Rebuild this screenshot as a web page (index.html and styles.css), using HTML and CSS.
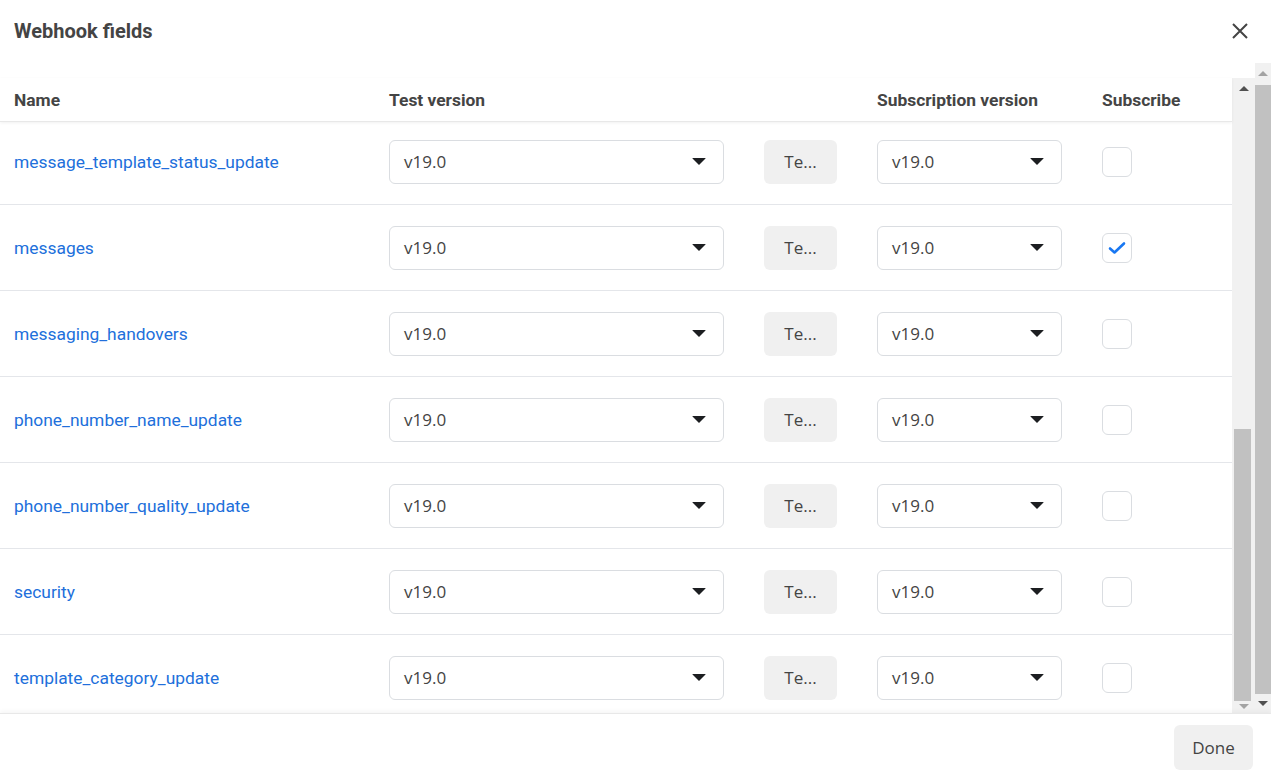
FILE: index.html
```html
<!DOCTYPE html>
<html>
<head>
<meta charset="utf-8">
<link rel="stylesheet" href="styles.css">
</head>
<body>
<div class="dialog">
  <div class="dialog-header">
    <h1 class="title">Webhook fields</h1>
    <button class="close" aria-label="Close">
      <svg width="18" height="18" viewBox="0 0 18 18"><path d="M2 2 L16 16 M16 2 L2 16" stroke="#444" stroke-width="2" fill="none"/></svg>
    </button>
  </div>
  <div class="dialog-body">
    <div class="table-wrap">
      <div class="table">
        <div class="row head">
          <div>Name</div>
          <div>Test version</div>
          <div></div>
          <div>Subscription version</div>
          <div>Subscribe</div>
        </div>
        <div class="rows">
          <div class="row">
            <a class="name">message_template_status_update</a>
            <div class="select big"><span>v19.0</span><i class="caret"></i></div>
            <button class="btn">Te...</button>
            <div class="select"><span>v19.0</span><i class="caret"></i></div>
            <span class="check"></span>
          </div>
          <div class="row">
            <a class="name">messages</a>
            <div class="select big"><span>v19.0</span><i class="caret"></i></div>
            <button class="btn">Te...</button>
            <div class="select"><span>v19.0</span><i class="caret"></i></div>
            <span class="check on"><svg width="18" height="14" viewBox="0 0 18 14"><path d="M2 7.5 L6.5 11.5 L16 2.5" stroke="#1877f2" stroke-width="2.6" fill="none" stroke-linecap="round" stroke-linejoin="round"/></svg></span>
          </div>
          <div class="row">
            <a class="name">messaging_handovers</a>
            <div class="select big"><span>v19.0</span><i class="caret"></i></div>
            <button class="btn">Te...</button>
            <div class="select"><span>v19.0</span><i class="caret"></i></div>
            <span class="check"></span>
          </div>
          <div class="row">
            <a class="name">phone_number_name_update</a>
            <div class="select big"><span>v19.0</span><i class="caret"></i></div>
            <button class="btn">Te...</button>
            <div class="select"><span>v19.0</span><i class="caret"></i></div>
            <span class="check"></span>
          </div>
          <div class="row">
            <a class="name">phone_number_quality_update</a>
            <div class="select big"><span>v19.0</span><i class="caret"></i></div>
            <button class="btn">Te...</button>
            <div class="select"><span>v19.0</span><i class="caret"></i></div>
            <span class="check"></span>
          </div>
          <div class="row">
            <a class="name">security</a>
            <div class="select big"><span>v19.0</span><i class="caret"></i></div>
            <button class="btn">Te...</button>
            <div class="select"><span>v19.0</span><i class="caret"></i></div>
            <span class="check"></span>
          </div>
          <div class="row last">
            <a class="name">template_category_update</a>
            <div class="select big"><span>v19.0</span><i class="caret"></i></div>
            <button class="btn">Te...</button>
            <div class="select"><span>v19.0</span><i class="caret"></i></div>
            <span class="check"></span>
          </div>
        </div>
      </div>
      <div class="scrollbar inner">
        <i class="arr up dark"></i>
        <div class="track"><div class="thumb"></div></div>
        <i class="arr down light"></i>
      </div>
    </div>
    <div class="scrollbar outer">
      <i class="arr up light"></i>
      <div class="track"><div class="thumb"></div></div>
      <i class="arr down dark"></i>
    </div>
  </div>
  <div class="dialog-footer">
    <button class="btn done">Done</button>
  </div>
</div>
</body>
</html>
```

FILE: styles.css
```css
* { box-sizing: border-box; }
html, body { margin: 0; padding: 0; background: #fff; }
body { font-family: Roboto, "Liberation Sans", sans-serif; color: #444950; width: 1271px; height: 778px; overflow: hidden; }

.dialog { display: flex; flex-direction: column; height: 778px; }

.dialog-header { height: 62px; display: flex; align-items: center; justify-content: space-between; padding: 0 22px 0 14px; flex: none; }
.title { margin: 0; font-size: 20px; font-weight: 700; color: #444; letter-spacing: 0; }
.close { background: none; border: 0; padding: 0; width: 18px; height: 18px; display: flex; cursor: pointer; }

.dialog-body { flex: 1; display: flex; min-height: 0; }
.table-wrap { flex: 1; display: flex; margin-top: 16px; min-height: 0; }
.table { flex: 1; display: flex; flex-direction: column; min-width: 0; min-height: 0; }

.row { display: grid; grid-template-columns: 335px 335px 73px 185px 30px; column-gap: 40px; padding-left: 14px; align-items: center; height: 86px; flex: none; border-bottom: 1px solid #e4e6ea; }
.row.head { height: 44px; font-weight: 700; font-size: 17.4px; color: #444; border-bottom: 1px solid #e8e8e8; box-shadow: 0 1px 3px rgba(0,0,0,0.06); position: relative; z-index: 1; }

.rows { flex: 1; overflow: hidden; min-height: 0; display: flex; flex-direction: column; }
.rows > .row:first-child { margin-top: -3px; }

.name { color: #216fdb; font-size: 17.4px; text-decoration: none; }

.select { height: 44px; border: 1px solid #dadde1; border-radius: 6px; display: flex; align-items: center; justify-content: space-between; padding: 0 17px 0 14px; font-family: "Open Sans", "Noto Sans", sans-serif; font-size: 17px; color: #444; }
.caret { width: 0; height: 0; border-left: 7px solid transparent; border-right: 7px solid transparent; border-top: 7px solid #1c1e21; border-radius: 1px; }

.btn { height: 44px; border: 0; border-radius: 6px; background: #f0f0f0; font-family: "Open Sans", "Noto Sans", sans-serif; font-size: 17px; color: #444; padding: 0; }

.check { width: 30px; height: 30px; border: 1px solid #dadde1; border-radius: 6px; display: flex; align-items: center; justify-content: center; }

.dialog-footer { flex: none; height: 65px; border-top: 1px solid #e8e8e8; box-shadow: 0 -2px 4px rgba(0,0,0,0.04); display: flex; align-items: center; justify-content: flex-end; padding-right: 18px; position: relative; z-index: 1; }
.done { width: 79px; height: 45px; margin-top: 3px; }

.scrollbar { display: flex; flex-direction: column; align-items: center; background: #f1f1f1; flex: none; }
.scrollbar .track { flex: 1; width: 100%; display: flex; flex-direction: column; }
.scrollbar .arr { width: 0; height: 0; border-left: 5px solid transparent; border-right: 5px solid transparent; flex: none; }
.arr.up { border-bottom: 5px solid; margin: 8px 0 9px; }
.arr.down { border-top: 5px solid; margin: 7px 0 7px; }
.arr.dark { border-bottom-color: #505050; border-top-color: #505050; }
.arr.light { border-bottom-color: #a3a3a3; border-top-color: #a3a3a3; }
.arr.up.dark, .arr.up.light { border-top-color: transparent; }
.arr.down.dark, .arr.down.light { border-bottom-color: transparent; }

.scrollbar.inner { width: 23px; }
.scrollbar.inner .arr.down { margin: 3px 0 4px; }
.scrollbar.inner .track { padding: 0 4px 0 2px; justify-content: flex-end; }
.scrollbar.inner .thumb { height: 272px; background: #c1c1c1; }

.scrollbar.outer { width: 16px; margin-top: 1px; }
.scrollbar.outer .thumb { flex: 1; background: #c1c1c1; }
```
